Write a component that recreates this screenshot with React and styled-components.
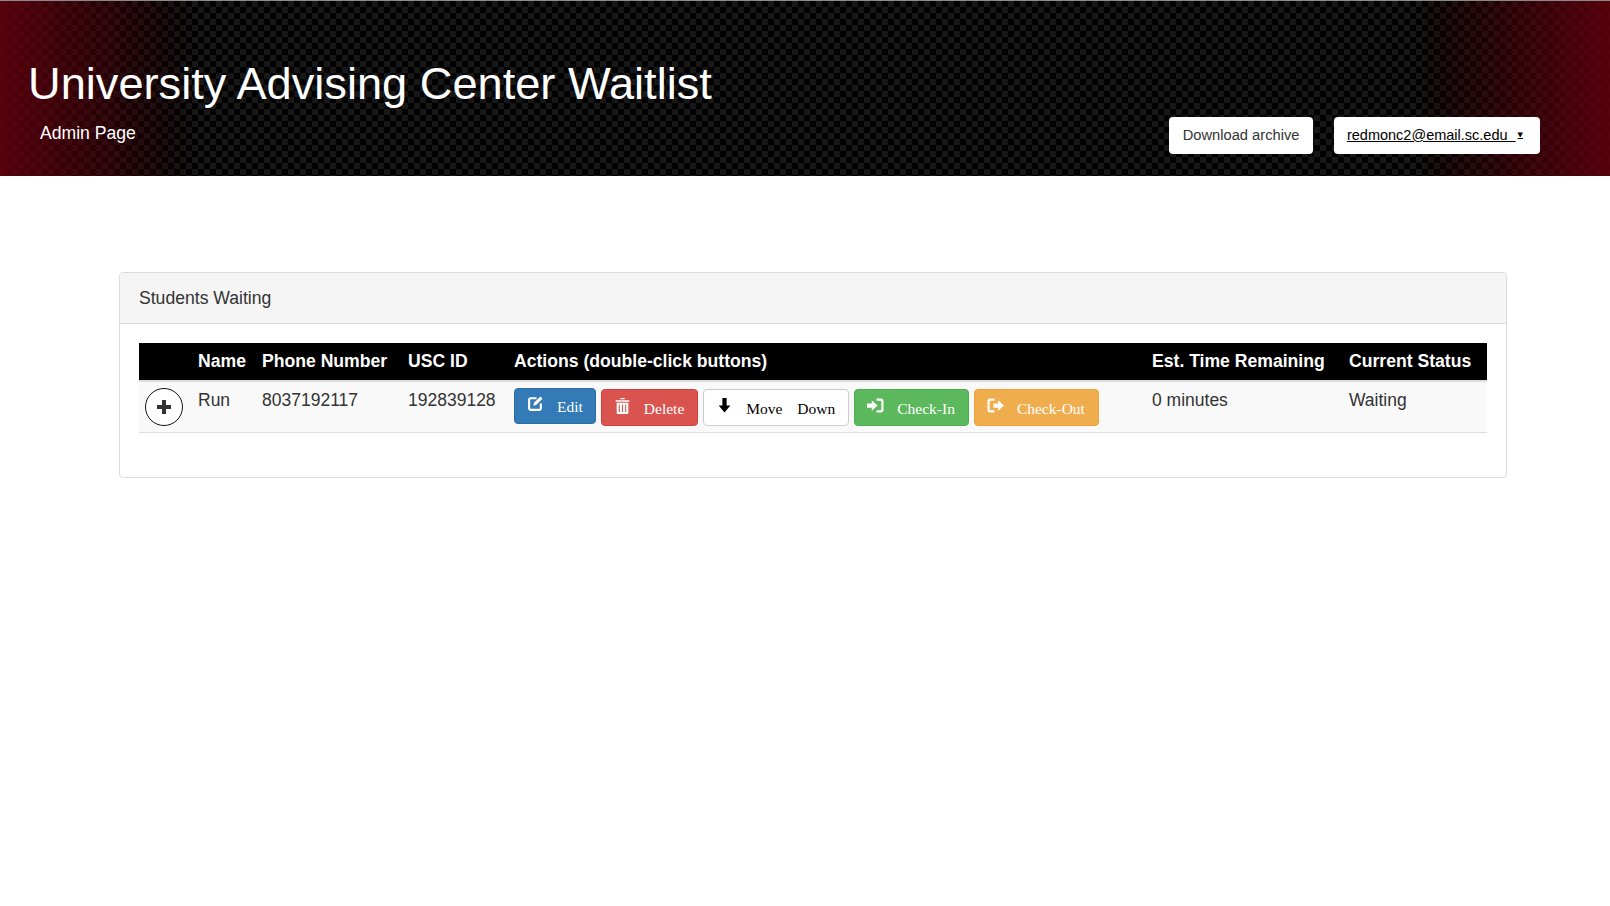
import styled, { createGlobalStyle } from "styled-components";

const Global = createGlobalStyle`
    html, body { margin: 0; padding: 0; background: #fff; }
    body { font-family: "Liberation Sans", Arial, sans-serif; color: #333; }
`;

const Header = styled.header`
    height: 176px;
    border-top: 1px solid #8a8a8a;
    box-sizing: border-box;
    display: flex;
    justify-content: space-between;
    align-items: flex-start;
    padding: 0 70px 0 28px;
    background:
        linear-gradient(90deg, rgba(95, 0, 12, 0.9) 0, rgba(30, 0, 2, 0.3) 170px, rgba(0, 0, 0, 0) 195px, rgba(0, 0, 0, 0) calc(100% - 195px), rgba(30, 0, 2, 0.3) calc(100% - 170px), rgba(95, 0, 12, 0.9) 100%),
        conic-gradient(#000 25%, #171717 0 50%, #000 0 75%, #171717 0) 0 0 / 12px 12px;
`;
const TitleBlock = styled.div`
    color: #fff;
`;
const Title = styled.h1`
    margin: 55px 0 0;
    font-size: 45.2px;
    line-height: 56px;
    font-weight: 400;
`;
const SubTitle = styled.div`
    margin: 10px 0 0 12px;
    font-size: 17.6px;
    line-height: 22px;
`;
const HeaderActions = styled.div`
    display: flex;
    gap: 21px;
    margin-top: 116px;
`;
const HeaderButton = styled.a`
    display: flex;
    align-items: center;
    height: 37px;
    box-sizing: border-box;
    padding: 0 ${p => (p.$link ? 13 : 13.5)}px 1px;
    background: #fff;
    border-radius: 4px;
    font-size: ${p => (p.$link ? 14.5 : 14.7)}px;
    color: ${p => (p.$link ? "#000" : "#333")};
    text-decoration: ${p => (p.$link ? "underline" : "none")};
    white-space: pre;
`;
const Caret = styled.span`
    font-family: "DejaVu Sans", sans-serif;
    font-size: 7px;
    margin: 0 4px 0 2px;
`;

const Panel = styled.section`
    margin: 96px 103px 0 119px;
    border: 1px solid #ddd;
    border-radius: 4px;
    box-shadow: 0 1px 1px rgba(0, 0, 0, 0.05);
`;
const PanelHeading = styled.div`
    height: 51px;
    box-sizing: border-box;
    padding: 0 19px;
    display: flex;
    align-items: center;
    background: #f5f5f5;
    border-bottom: 1px solid #ddd;
    border-radius: 3px 3px 0 0;
    font-size: 17.6px;
`;
const PanelBody = styled.div`
    padding: 19px 19px 44px;
`;
const Table = styled.table`
    width: 100%;
    table-layout: fixed;
    border-collapse: collapse;
    font-size: 17.5px;
`;
const HeadCell = styled.th`
    height: 37px;
    padding: 0 6px;
    background: #000;
    color: #fff;
    text-align: left;
    font-weight: 700;
    font-size: 17.6px;
    white-space: nowrap;
    border-bottom: 2px solid #ddd;
`;
const Row = styled.tr`
    background: #f9f9f9;
    border-bottom: 1px solid #ddd;
`;
const Cell = styled.td`
    height: 51px;
    box-sizing: border-box;
    padding: 8px 6px 0;
    vertical-align: top;
    line-height: 21px;
`;
const ExpandCell = styled(Cell)`
    padding-top: 6px;
`;
const ExpandButton = styled.div`
    width: 38px;
    height: 38px;
    box-sizing: border-box;
    border: 1px solid #111;
    border-radius: 50%;
    display: flex;
    align-items: center;
    justify-content: center;
    color: #333;
    background: #fff;
`;
const ActionList = styled.div`
    display: flex;
    align-items: flex-start;
    gap: 5px;
`;
const palette = {
    primary: { bg: "#337ab7", border: "#2e6da4", color: "#fff" },
    danger: { bg: "#d9534f", border: "#d43f3a", color: "#fff" },
    plain: { bg: "#fff", border: "#ccc", color: "#000" },
    success: { bg: "#5cb85c", border: "#4cae4c", color: "#fff" },
    warning: { bg: "#f0ad4e", border: "#eea236", color: "#fff" },
};
const ActionButton = styled.button`
    display: flex;
    align-items: center;
    height: ${p => (p.$raised ? 36 : 37)}px;
    margin-top: ${p => (p.$raised ? 0 : 1)}px;
    box-sizing: border-box;
    padding: 0 ${p => (p.$raised ? 12 : 13)}px 0 12px;
    border: 1px solid ${p => palette[p.$kind].border};
    border-radius: 4px;
    background: ${p => palette[p.$kind].bg};
    color: ${p => palette[p.$kind].color};
    font-family: "Liberation Serif", "Times New Roman", serif;
    font-size: 15.5px;
`;
const ActionIcon = styled.svg`
    width: 17px;
    height: 17px;
    margin-top: -5px;
    flex: none;
`;
const ActionLabel = styled.span`
    margin-left: 13px;
    margin-top: ${p => (p.$raised ? 1 : 3)}px;
    word-spacing: ${p => p.$spacing || 0}px;
    white-space: nowrap;
`;

const EditIcon = () => (
    <ActionIcon viewBox="0 0 16 16" fill="none" stroke="currentColor">
        <path d="M9 3H3.500A1.500 1.500 0 0 0 2 4.500v8A1.500 1.500 0 0 0 3.500 14h8a1.500 1.500 0 0 0 1.500-1.500V8" strokeWidth="2" />
        <path d="M6 10l.6-2.600L12.600 1.500l2 2L8.600 9.400z" fill="currentColor" stroke="none" />
    </ActionIcon>
);
const TrashIcon = () => (
    <ActionIcon viewBox="0 0 16 16" fill="currentColor">
        <path d="M1.500 3h13v1.500h-13zM6 1h4v1.200H6z" />
        <path d="M2.500 5.500h11V15a1 1 0 0 1-1 1h-9a1 1 0 0 1-1-1zM4.500 7v7h1V7zm3 0v7h1V7zm3 0v7h1V7z" fillRule="evenodd" />
    </ActionIcon>
);
const ArrowIcon = () => (
    <ActionIcon viewBox="0 0 16 16" fill="currentColor">
        <path d="M6 1h4v7h3.500L8 14.500 2.500 8H6z" />
    </ActionIcon>
);
const LogInIcon = () => (
    <ActionIcon viewBox="0 0 16 16" fill="currentColor">
        <path d="M0 6h4.500V3L10 8l-5.500 5v-3H0z" />
        <path d="M9 1.500h4A2.500 2.500 0 0 1 15.500 4v8a2.500 2.500 0 0 1-2.500 2.500H9v-2h3.500a1 1 0 0 0 1-1v-7a1 1 0 0 0-1-1H9z" />
    </ActionIcon>
);
const LogOutIcon = () => (
    <ActionIcon viewBox="0 0 16 16" fill="currentColor">
        <path d="M7 1.500H3A2.500 2.500 0 0 0 .5 4v8A2.500 2.500 0 0 0 3 14.500h4v-2H3.500a1 1 0 0 1-1-1v-7a1 1 0 0 1 1-1H7z" />
        <path d="M6 6h4.500V3L16 8l-5.500 5v-3H6z" />
    </ActionIcon>
);

const columns = [
    { label: "", width: 53 },
    { label: "Name", width: 64 },
    { label: "Phone Number", width: 146 },
    { label: "USC ID", width: 106 },
    { label: "Actions (double-click buttons)", width: 638 },
    { label: "Est. Time Remaining", width: 197 },
    { label: "Current Status", width: 144 },
];

function App() {
    return (
        <>
            <Global />
            <Header>
                <TitleBlock>
                    <Title>University Advising Center Waitlist</Title>
                    <SubTitle>Admin Page</SubTitle>
                </TitleBlock>
                <HeaderActions>
                    <HeaderButton>Download archive</HeaderButton>
                    <HeaderButton $link>redmonc2@email.sc.edu  <Caret>▼</Caret>  </HeaderButton>
                </HeaderActions>
            </Header>
            <Panel>
                <PanelHeading>Students Waiting</PanelHeading>
                <PanelBody>
                    <Table>
                        <colgroup>
                            {columns.map((c, i) => <col key={i} style={{ width: c.width }} />)}
                        </colgroup>
                        <thead>
                            <tr>
                                {columns.map((c, i) => <HeadCell key={i}>{c.label}</HeadCell>)}
                            </tr>
                        </thead>
                        <tbody>
                            <Row>
                                <ExpandCell>
                                    <ExpandButton>
                                        <svg width="14" height="14" viewBox="0 0 14 14" fill="currentColor">
                                            <path d="M5 0h4v5h5v4H9v5H5V9H0V5h5z" />
                                        </svg>
                                    </ExpandButton>
                                </ExpandCell>
                                <Cell>Run</Cell>
                                <Cell>8037192117</Cell>
                                <Cell>192839128</Cell>
                                <ExpandCell>
                                    <ActionList>
                                        <ActionButton $kind="primary" $raised><EditIcon /><ActionLabel $raised>Edit</ActionLabel></ActionButton>
                                        <ActionButton $kind="danger"><TrashIcon /><ActionLabel>Delete</ActionLabel></ActionButton>
                                        <ActionButton $kind="plain"><ArrowIcon /><ActionLabel $spacing={11}>Move Down</ActionLabel></ActionButton>
                                        <ActionButton $kind="success"><LogInIcon /><ActionLabel>Check-In</ActionLabel></ActionButton>
                                        <ActionButton $kind="warning"><LogOutIcon /><ActionLabel>Check-Out</ActionLabel></ActionButton>
                                    </ActionList>
                                </ExpandCell>
                                <Cell>0 minutes</Cell>
                                <Cell>Waiting</Cell>
                            </Row>
                        </tbody>
                    </Table>
                </PanelBody>
            </Panel>
        </>
    );
}
export default App;
